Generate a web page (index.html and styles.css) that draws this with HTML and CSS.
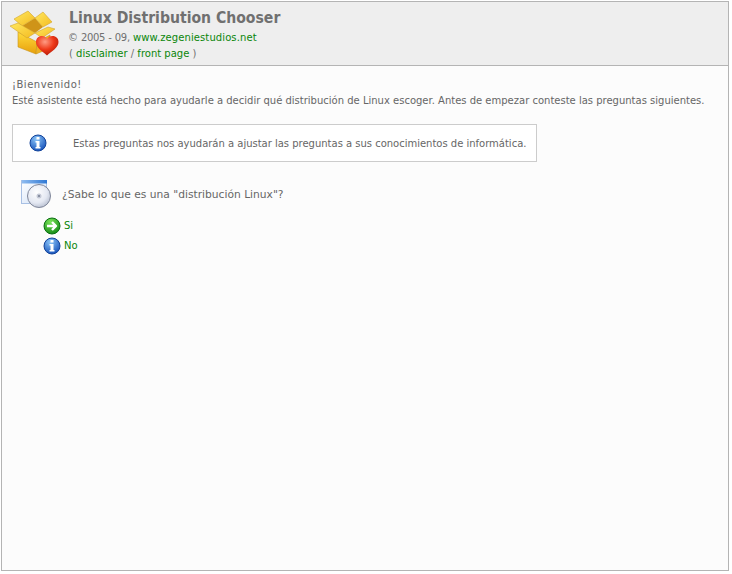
FILE: index.html
```html
<!DOCTYPE html>
<html lang="es">
<head>
<meta charset="utf-8">
<title>Linux Distribution Chooser</title>
<link rel="stylesheet" href="styles.css">
</head>
<body>
<div class="frame">
  <header class="header">
    <svg class="logo" width="52" height="50" viewBox="8 8 52 50">
      <defs>
        <linearGradient id="box" x1="0" y1="0" x2="0" y2="1"><stop offset="0" stop-color="#ffdc3c"/><stop offset="1" stop-color="#e89f0c"/></linearGradient>
        <linearGradient id="flap" x1="0" y1="0" x2="1" y2="1"><stop offset="0" stop-color="#ffe860"/><stop offset="1" stop-color="#f4bb20"/></linearGradient>
        <radialGradient id="heart" cx=".4" cy=".3" r=".8"><stop offset="0" stop-color="#ff9c84"/><stop offset=".5" stop-color="#ee3818"/><stop offset="1" stop-color="#a51505"/></radialGradient>
      </defs>
      <path d="M18 32 L37 42 L36 54 L18 47Z" fill="url(#box)" stroke="#c8961e" stroke-width=".6"/>
      <path d="M37 42 L50 35 L50 48 L36 54Z" fill="#eeb020" stroke="#c8961e" stroke-width=".6"/>
      <path d="M22 26 L35 18 L43 27 L35 33Z" fill="#cf9418"/>
      <path d="M14 19 L28 11 L35 18 L22 26Z" fill="url(#flap)" stroke="#d2a42c" stroke-width=".6"/>
      <path d="M35 18 L43 12 L52 22 L43 27Z" fill="url(#flap)" stroke="#d2a42c" stroke-width=".6"/>
      <path d="M10 26 L18 23 L35 33 L27 38Z" fill="url(#flap)" stroke="#d2a42c" stroke-width=".6"/>
      <path d="M35 33 L48 27 L55 29 L42 38Z" fill="url(#flap)" stroke="#d2a42c" stroke-width=".6"/>
      <path d="M47 55.500 C42 51 36 47.500 36 42 C36 38 39 36 42 36 C44.500 36 46 37 47 39 C48 37 50 36 52.500 36 C56 36 58.500 38.500 58.500 42 C58.500 47.500 52 51 47 55.500Z" fill="url(#heart)"/>
    </svg>
    <div class="head-text">
      <h1 class="title">Linux Distribution Chooser</h1>
      <p class="meta"><span class="copy">© 2005 - 09, </span><a class="link site" href="#">www.zegeniestudios.net</a></p>
      <p class="meta meta-links">( <a class="link" href="#">disclaimer</a> / <a class="link" href="#">front page</a> )</p>
    </div>
  </header>
  <main class="content">
    <p class="intro"><strong class="welcome">¡Bienvenido!</strong><br>Esté asistente está hecho para ayudarle a decidir qué distribución de Linux escoger. Antes de empezar conteste las preguntas siguientes.</p>
    <div class="notice">
      <svg class="notice-icon" width="18" height="18" viewBox="0 0 18 18"><use href="#info"/></svg>
      <span class="notice-text">Estas preguntas nos ayudarán a ajustar las preguntas a sus conocimientos de informática.</span>
    </div>
    <div class="question">
      <svg class="cd" width="32" height="32" viewBox="0 0 32 32">
        <defs>
          <radialGradient id="disc" cx=".4" cy=".35" r=".75"><stop offset="0" stop-color="#fff"/><stop offset=".6" stop-color="#e4e8f2"/><stop offset="1" stop-color="#aeb6c8"/></radialGradient>
          <linearGradient id="win" x1="0" y1="0" x2="1" y2="1"><stop offset="0" stop-color="#fff"/><stop offset="1" stop-color="#cfe0f8"/></linearGradient>
          <linearGradient id="bar" x1="0" y1="0" x2="1" y2="0"><stop offset="0" stop-color="#8fbcf0"/><stop offset="1" stop-color="#2f78d4"/></linearGradient>
        </defs>
        <rect x=".5" y="1.500" width="25" height="23" fill="url(#win)" stroke="#a8c0e4"/>
        <rect x="1" y="1" width="25" height="3.500" fill="url(#bar)"/>
        <circle cx="18" cy="17" r="11.500" fill="url(#disc)" stroke="#80879a"/>
        <circle cx="18" cy="17" r="2.500" fill="#c4c9d6"/>
        <circle cx="18" cy="17" r="1" fill="#767d90"/>
      </svg>
      <span>¿Sabe lo que es una "distribución Linux"?</span>
    </div>
    <ul class="answers">
      <li class="answer">
        <svg width="18" height="18" viewBox="0 0 18 18">
          <defs><radialGradient id="green" cx=".4" cy=".25" r=".85"><stop offset="0" stop-color="#7be45a"/><stop offset="1" stop-color="#0a820e"/></radialGradient></defs>
          <circle cx="9" cy="9" r="8" fill="url(#green)" stroke="#0a6f12"/>
          <path d="M4 9H12.500M9 5L13 9L9 13" fill="none" stroke="#fff" stroke-width="2.400" stroke-linejoin="round"/>
        </svg>
        <a class="link" href="#">Si</a>
      </li>
      <li class="answer">
        <svg width="18" height="18" viewBox="0 0 18 18"><use href="#info"/></svg>
        <a class="link" href="#">No</a>
      </li>
    </ul>
  </main>
</div>
<svg class="defs" width="0" height="0">
  <defs>
    <radialGradient id="blue" cx=".4" cy=".25" r=".85"><stop offset="0" stop-color="#8cc6f8"/><stop offset="1" stop-color="#0a46b4"/></radialGradient>
    <g id="info">
      <circle cx="9" cy="9" r="8" fill="url(#blue)" stroke="#12439a"/>
      <rect x="7.500" y="3" width="3" height="2.500" fill="#fff"/>
      <path d="M6.500 7H10.500V13H11.500V14.500H6.500V13H7.500V8.500H6.500Z" fill="#fff"/>
    </g>
  </defs>
</svg>
</body>
</html>
```
FILE: styles.css
```css
html, body { margin: 0; background: #fff; }
body { padding: 1px 3px 3px 1px; font: 10px/16px "DejaVu Sans", Verdana, sans-serif; color: #666; }
.frame { box-sizing: border-box; height: 570px; border: 1px solid #b4b4b4; background: #fcfcfc; }
.header { box-sizing: border-box; height: 64px; display: flex; gap: 8px; padding: 6px 0 0 6px; background: #eee; border-bottom: 1px solid #b4b4b4; }
.logo { flex: none; }
.head-text { padding-top: 2px; }
.title { margin: 0 0 3px 1px; font-family: "DejaVu Sans Condensed", "DejaVu Sans", sans-serif; font-size: 15.6px; line-height: 17px; color: #707070; font-weight: bold; }
.meta { margin: 0; font-size: 10px; line-height: 16px; color: #707070; word-spacing: .3px; }
.meta-links { word-spacing: 0; padding-left: 1px; }
.copy { letter-spacing: -.3px; }
.site { letter-spacing: .1px; }
.link { color: #0a860a; text-decoration: none; }
.content { padding: 11px 10px 10px; }
.intro { margin: 0; line-height: 16px; }
.welcome { font-weight: normal; letter-spacing: .5px; }
.notice { box-sizing: border-box; width: 525px; height: 38px; margin-top: 15px; display: flex; align-items: center; gap: 26px; padding-left: 16px; border: 1px solid #ccc; background: #fff; }
.notice-icon { flex: none; }
.notice-text { padding-top: 1px; letter-spacing: -.01px; }
.question { display: flex; align-items: center; gap: 9px; margin: 17px 0 0 9px; font-size: 10.7px; }
.cd { flex: none; }
.answers { list-style: none; margin: 5px 0 0 31px; padding: 0; }
.answer { display: flex; align-items: center; gap: 3px; height: 20px; }
.defs { position: absolute; }
```
